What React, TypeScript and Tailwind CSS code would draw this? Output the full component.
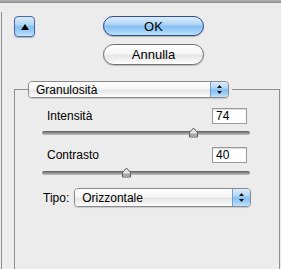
import React from 'react';

const blueGrad =
  'bg-[linear-gradient(to_bottom,#dcecfc_0%,#b2d6f6_40%,#86bff0_52%,#9fd0f8_80%,#c4e4fc_100%)]';
const whiteGrad =
  'bg-[linear-gradient(to_bottom,#ffffff_0%,#f6f6f6_45%,#e6e6e6_55%,#f4f4f4_85%,#ffffff_100%)]';

function UpDown() {
  return (
    <svg width="7" height="11" viewBox="0 0 7 11">
      <path d="M3.5 1 L6 4 L1 4 Z" fill="#111" />
      <path d="M3.5 10 L6 7 L1 7 Z" fill="#111" />
    </svg>
  );
}

function Popup({ label, className }: { label: string; className: string }) {
  return (
    <div
      className={`flex rounded-[4px] border border-[#8a8a8a] overflow-hidden shadow-[0_1px_1px_rgba(0,0,0,0.15)] ${className}`}
    >
      <div className={`flex-1 flex items-center pl-[7px] text-[12px] text-black ${whiteGrad}`}>{label}</div>
      <div className={`w-[18px] flex items-center justify-center border-l border-[#7d9cc8] ${blueGrad}`}>
        <UpDown />
      </div>
    </div>
  );
}

function Slider({ value, className }: { value: number; className: string }) {
  return (
    <div className={`relative h-[11px] shrink-0 ${className}`}>
      <div className="absolute left-0 right-0 top-[4px] h-[4px] rounded-full bg-[linear-gradient(to_bottom,#5c5c5c,#9a9a9a_60%,#c4c4c4)]" />
      <svg
        width="11"
        height="11"
        viewBox="0 0 11 11"
        className="absolute top-0"
        style={{ left: `calc(${value / 100} * (100% - 11px))` }}
      >
        <path d="M1.5 10 V5.5 L5.5 1 L9.5 5.5 V10 Z" fill="#e4e4e4" stroke="#5a5a5a" strokeWidth="1" />
        <rect x="2" y="6.5" width="7" height="3" fill="#a8a8a8" />
      </svg>
    </div>
  );
}

function ValueRow({ label, value, className }: { label: string; value: string; className: string }) {
  return (
    <div className={`flex items-center justify-between ml-[32px] mr-[32px] h-[16px] shrink-0 ${className}`}>
      <span className="text-[12px] text-black">{label}</span>
      <div className="w-[35px] h-[16px] bg-white border border-[#9a9a9a] shadow-[inset_0_1px_1px_rgba(0,0,0,0.15)] text-[12px] leading-[14px] pl-[3px] text-black">
        {value}
      </div>
    </div>
  );
}

export default function App() {
  return (
    <div className="w-[281px] h-[269px] overflow-hidden flex flex-col bg-[#ececec] font-['Liberation_Sans',Arial,sans-serif]">
      <div className="h-[3px] shrink-0 bg-[linear-gradient(to_bottom,#b4b4b4,#8c8c8c)]" />
      <div className="flex-1 min-h-0 mt-[9px] ml-[1px] border-l border-[#8e8e8e] flex flex-col">
        <div className="flex items-start pt-[4px] shrink-0">
          <button
            className={`ml-[12px] w-[21px] h-[21px] rounded-[4px] border border-[#4a68a8] flex items-center justify-center shadow-[0_1px_1px_rgba(0,0,0,0.25)] ${blueGrad}`}
          >
            <svg width="8" height="6" viewBox="0 0 8 6">
              <path d="M4 0 L8 6 L0 6 Z" fill="#000" />
            </svg>
          </button>
          <div className="ml-[68px] flex flex-col gap-[8px]">
            <button
              className={`w-[101px] h-[20px] rounded-full border border-[#2e4c92] text-[13px] leading-none text-black flex items-center justify-center shadow-[0_1px_1px_rgba(0,0,0,0.25)] ${blueGrad}`}
            >
              OK
            </button>
            <button
              className={`w-[101px] h-[21px] rounded-full border border-[#6f6f6f] text-[13px] leading-none text-black flex items-center justify-center shadow-[0_1px_1px_rgba(0,0,0,0.2)] ${whiteGrad}`}
            >
              Annulla
            </button>
          </div>
        </div>

        <fieldset className="flex-1 mt-[16px] ml-[12px] w-[266px] min-h-[200px] border border-[#8e8e8e] border-b-0 flex flex-col">
          <legend className="ml-[13px] pr-[3px]">
            <Popup label="Granulosità" className="w-[201px] h-[17px]" />
          </legend>
          <ValueRow label="Intensità" value="74" className="mt-[10px]" />
          <Slider value={74} className="mt-[3px] ml-[27px] mr-[29px]" />
          <ValueRow label="Contrasto" value="40" className="mt-[9px]" />
          <Slider value={40} className="mt-[4px] ml-[27px] mr-[29px]" />
          <div className="mt-[10px] ml-[28px] flex items-center shrink-0">
            <span className="text-[12px] text-black">Tipo:</span>
            <Popup label="Orizzontale" className="ml-[5px] w-[177px] h-[19px]" />
          </div>
        </fieldset>
      </div>
    </div>
  );
}
